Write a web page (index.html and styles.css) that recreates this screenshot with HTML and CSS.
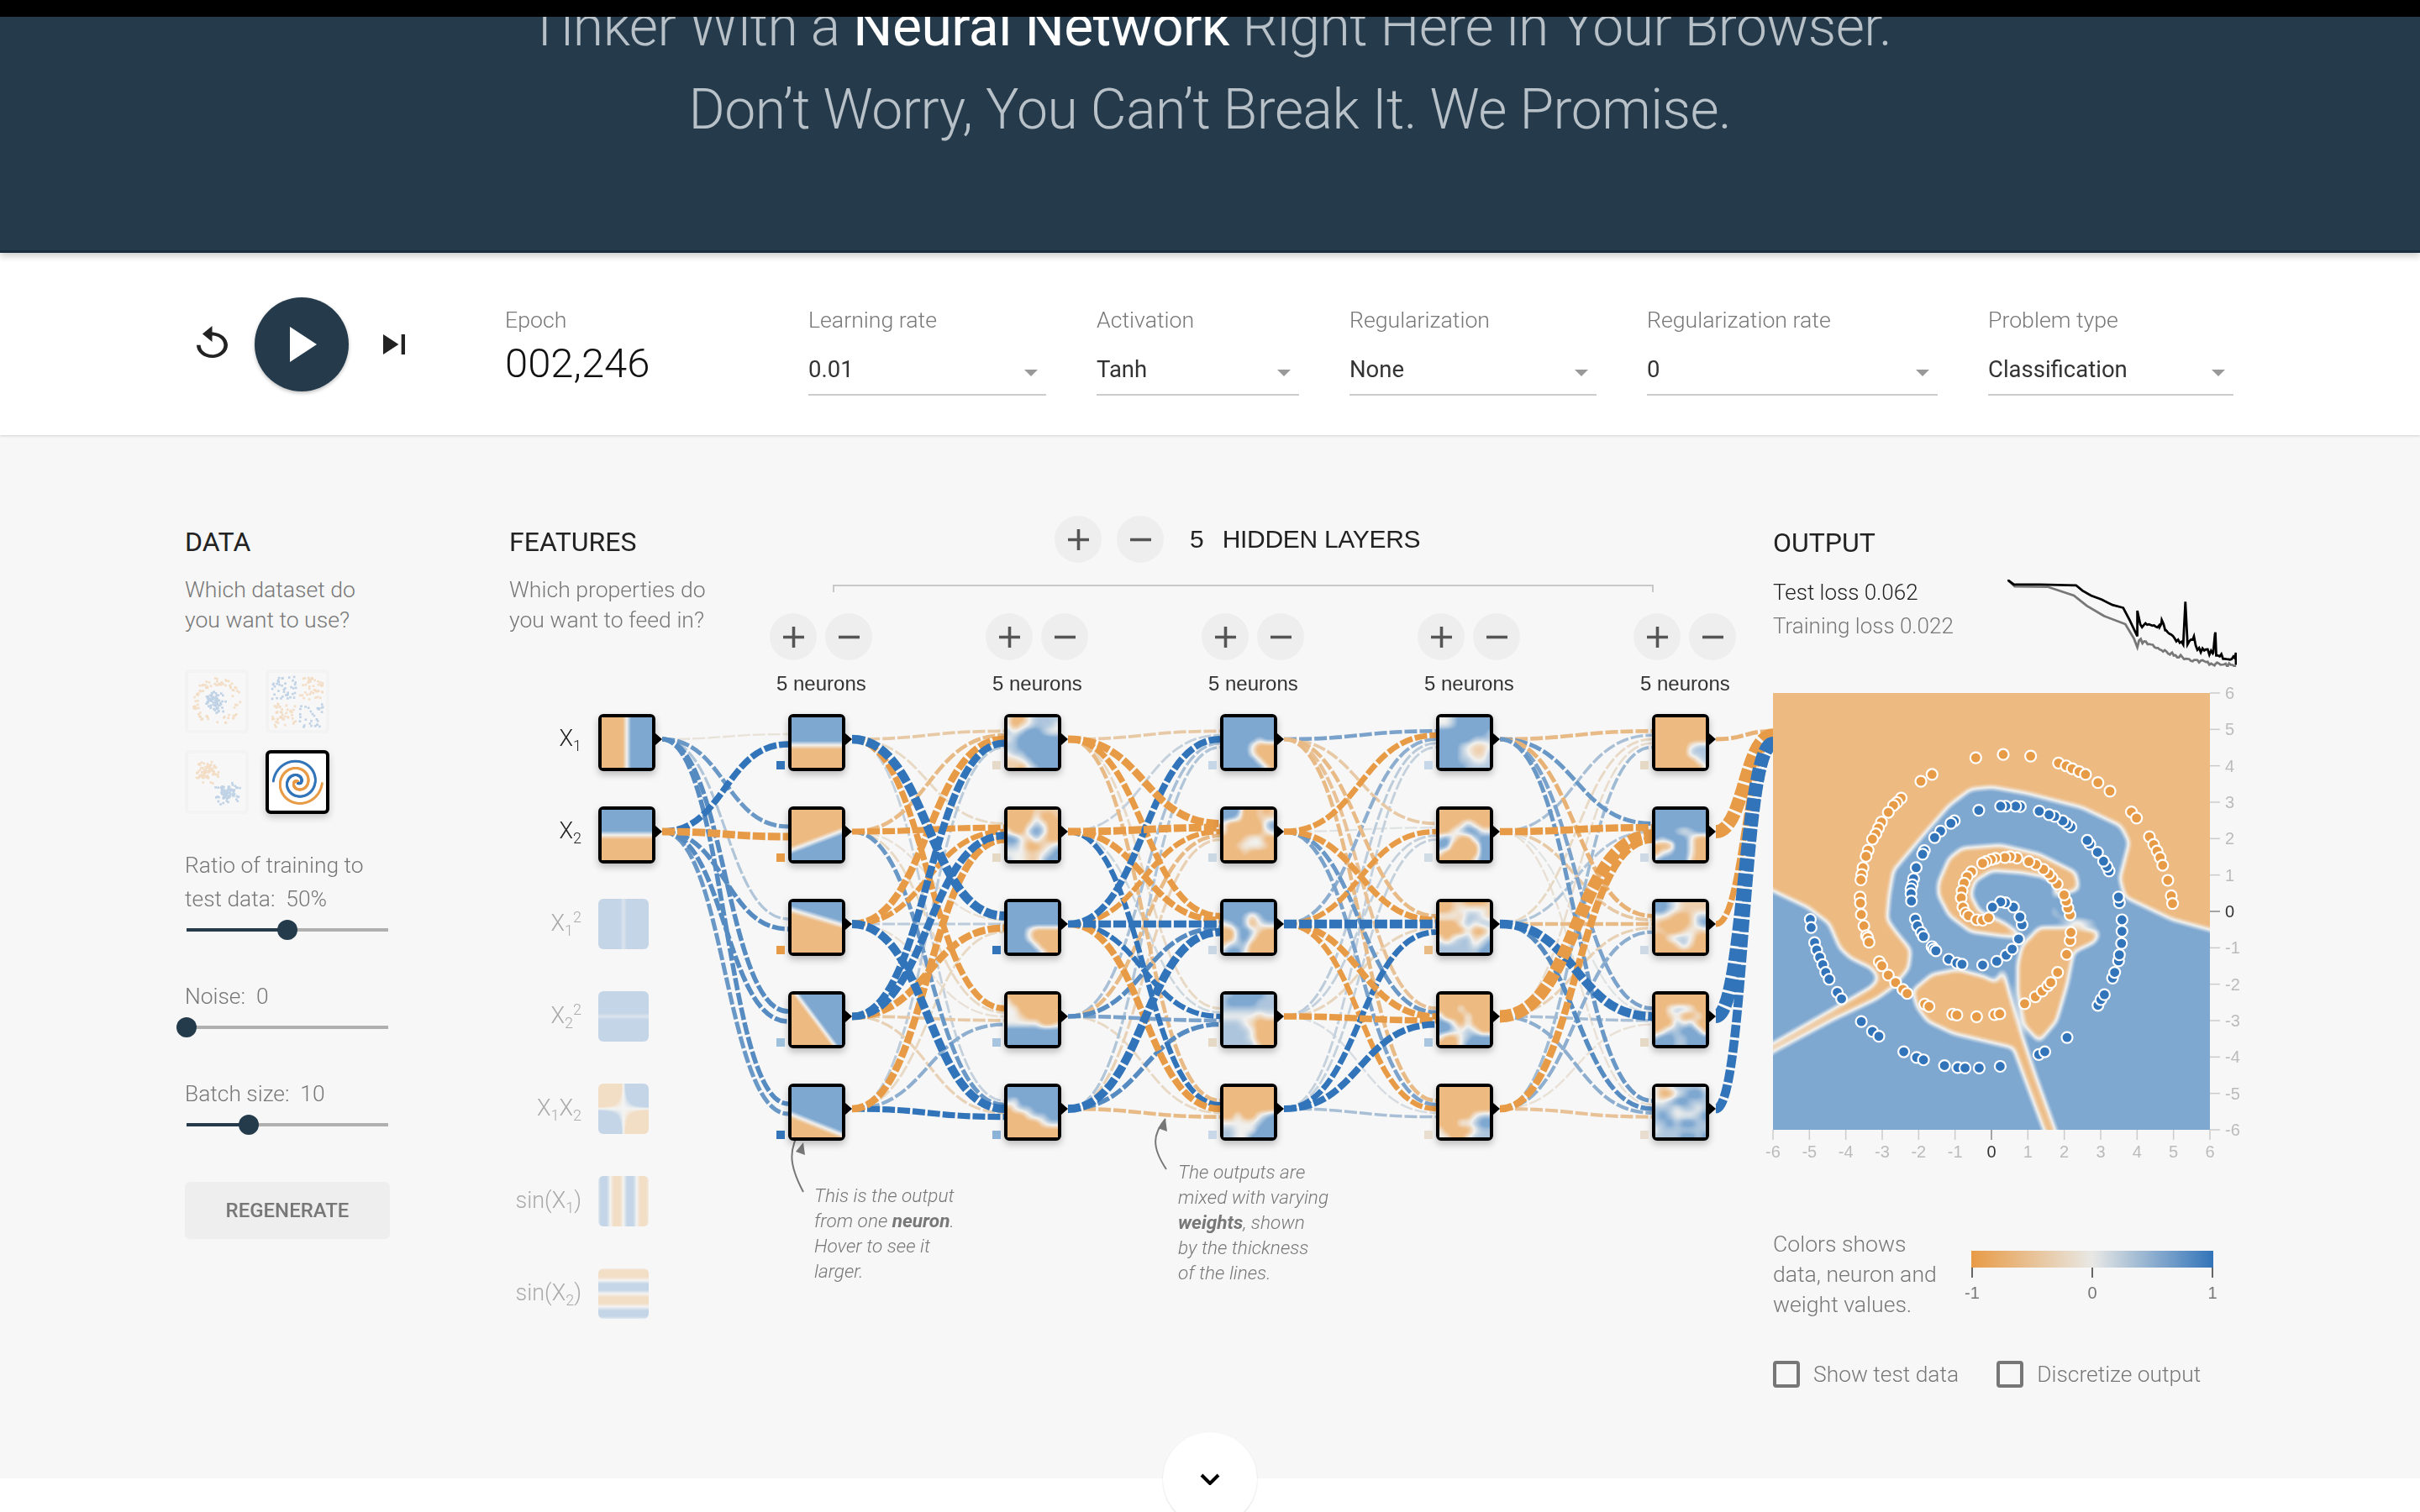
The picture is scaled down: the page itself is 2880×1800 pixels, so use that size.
FILE: index.html
```html
<!DOCTYPE html>
<html lang="en">

<head>
    <meta charset="UTF-8">
    <title>A Neural Network Playground</title>
    <link rel="stylesheet" href="styles.css">
</head>

<body>
    <div class="topbar"></div>
    <header class="hero">
        <h1>Tinker With a <b>Neural Network</b> Right Here in Your Browser.<br>Don’t Worry, You Can’t Break It. We Promise.</h1>
    </header>

    <section class="controls">
        <div class="timeline">
            <svg class="icon-reset" viewBox="4 1 16 21" preserveAspectRatio="none"><path d="M12 5V1L7 6l5 5V7c3.31 0 6 2.69 6 6s-2.69 6-6 6-6-2.69-6-6H4c0 4.42 3.58 8 8 8s8-3.58 8-8-3.58-8-8-8z"/></svg>
            <button class="play"><svg viewBox="0 0 32 42"><path d="M0 0L32 21L0 42z"/></svg></button>
            <svg class="icon-step" viewBox="6 6 12 12" preserveAspectRatio="none"><path d="M6 18l8.5-6L6 6v12zM16 6v12h2V6h-2z"/></svg>
        </div>
        <div class="epoch">
            <div class="field-label">Epoch</div>
            <div class="epoch-value">002,246</div>
        </div>
        <div class="select w-rate">
            <div class="field-label">Learning rate</div>
            <div class="select-value"><span>0.01</span><i class="caret"></i></div>
        </div>
        <div class="select w-activation">
            <div class="field-label">Activation</div>
            <div class="select-value"><span>Tanh</span><i class="caret"></i></div>
        </div>
        <div class="select w-reg">
            <div class="field-label">Regularization</div>
            <div class="select-value"><span>None</span><i class="caret"></i></div>
        </div>
        <div class="select w-regrate">
            <div class="field-label">Regularization rate</div>
            <div class="select-value"><span>0</span><i class="caret"></i></div>
        </div>
        <div class="select w-problem">
            <div class="field-label">Problem type</div>
            <div class="select-value"><span>Classification</span><i class="caret"></i></div>
        </div>
    </section>

    <main class="board">
        <section class="data-col">
            <h4>DATA</h4>
            <p class="desc">Which dataset do<br>you want to use?</p>
            <div class="datasets">
                <canvas class="dataset" id="ds-circle" width="68" height="68"></canvas>
                <canvas class="dataset" id="ds-xor" width="68" height="68"></canvas>
                <canvas class="dataset" id="ds-gauss" width="68" height="68"></canvas>
                <canvas class="dataset selected" id="ds-spiral" width="68" height="68"></canvas>
            </div>
            <div class="slider-label first">Ratio of training to<br>test data:&nbsp; 50%</div>
            <div class="slider"><div class="fill" style="width:50%"></div><div class="thumb" style="left:50%"></div></div>
            <div class="slider-label">Noise:&nbsp; 0</div>
            <div class="slider"><div class="fill" style="width:0%"></div><div class="thumb" style="left:0%"></div></div>
            <div class="slider-label">Batch size:&nbsp; 10</div>
            <div class="slider"><div class="fill" style="width:30.8%"></div><div class="thumb" style="left:30.8%"></div></div>
            <button class="regen">REGENERATE</button>
        </section>

        <section class="net-col" id="net">
            <div class="net-head">
                <div class="features">
                    <h4>FEATURES</h4>
                    <p class="desc">Which properties do<br>you want to feed in?</p>
                </div>
                <div class="layers-head">
                    <button class="round"><svg viewBox="5 5 14 14"><path d="M19 13h-6v6h-2v-6H5v-2h6V5h2v6h6v2z"/></svg></button>
                    <button class="round"><svg viewBox="5 5 14 14"><path d="M19 13H5v-2h14v2z"/></svg></button>
                    <span class="layer-count">5</span>
                    <span class="layer-title">HIDDEN LAYERS</span>
                </div>
            </div>
            <svg class="links" id="links" viewBox="606 518 1504 1242"></svg>
            <div class="note note-one">This is the output<br>from one <b>neuron</b>.<br>Hover to see it<br>larger.</div>
            <div class="note note-two">The outputs are<br>mixed with varying<br><b>weights</b>, shown<br>by the thickness<br>of the lines.</div>
        </section>

        <section class="output-col">
            <h4>OUTPUT</h4>
            <div class="loss-row">
                <div class="stats">
                    <div class="test-loss">Test loss 0.062</div>
                    <div class="train-loss">Training loss 0.022</div>
                </div>
                <svg class="loss-chart" id="loss" viewBox="605 186 535 214" preserveAspectRatio="none"></svg>
            </div>
            <div class="plot">
                <canvas id="heat" width="520" height="520"></canvas>
                <svg class="axes" id="axes" viewBox="0 0 520 520"></svg>
            </div>
            <div class="legend">
                <p class="legend-text">Colors shows<br>data, neuron and<br>weight values.</p>
                <svg class="legend-scale" viewBox="0 0 288 64">
                    <defs>
                        <linearGradient id="scale">
                            <stop offset="0" stop-color="#e89b46"/>
                            <stop offset="0.5" stop-color="#e8e8e5"/>
                            <stop offset="1" stop-color="#3274b9"/>
                        </linearGradient>
                    </defs>
                    <rect width="288" height="20" fill="url(#scale)"/>
                    <path d="M1 20v12M144 20v12M287 20v12" stroke="#666" stroke-width="2"/>
                    <text x="1" y="57" text-anchor="middle">-1</text>
                    <text x="144" y="57" text-anchor="middle">0</text>
                    <text x="287" y="57" text-anchor="middle">1</text>
                </svg>
            </div>
            <div class="checks">
                <label class="check"><i class="box"></i>Show test data</label>
                <label class="check"><i class="box"></i>Discretize output</label>
            </div>
        </section>
    </main>

    <footer class="foot">
        <button class="more"><svg viewBox="0 0 24 14"><path d="M2 2l10 10L22 2" fill="none" stroke="#000" stroke-width="4"/></svg></button>
    </footer>

    <script src="app.js"></script>
</body>

</html>
```

FILE: styles.css
```css
* {
    box-sizing: border-box;
}

html,
body {
    margin: 0;
    padding: 0;
    height: 1800px;
    overflow: hidden;
}

body {
    font-family: Roboto, "Liberation Sans", sans-serif;
    font-weight: 300;
    background-color: #fff;
    color: #222;
}

button {
    border: none;
    padding: 0;
    font-family: inherit;
}

.topbar {
    height: 20px;
    background-color: #000;
    position: relative;
    z-index: 3;
}

.hero {
    display: flow-root;
    height: 281px;
    background-color: #253b4c;
    border-bottom: 3px solid #1a2d3e;
    box-shadow: 0 4px 8px rgba(0, 0, 0, 0.2);
    position: relative;
    z-index: 2;
}

.hero h1 {
    margin: -38px 0 0;
    font-size: 66px;
    font-weight: 300;
    line-height: 99px;
    letter-spacing: -0.5px;
    text-align: center;
    color: #b9c1c8;
}

.hero h1 b {
    font-weight: 400;
    color: #fff;
}

/* controls bar */
.controls {
    height: 217px;
    padding: 62px 0 0 234px;
    background-color: #fff;
    box-shadow: 0 1px 3px rgba(0, 0, 0, 0.15);
    display: flex;
    align-items: flex-start;
    position: relative;
    z-index: 1;
}

.timeline {
    margin-top: -9px;
    display: flex;
    align-items: center;
    height: 112px;
}

.icon-reset {
    width: 37px;
    height: 40px;
    margin: -4px 32px 0 0;
    fill: #222;
}

.icon-step {
    width: 26px;
    height: 24px;
    margin-left: 41px;
    fill: #222;
}

.play {
    width: 112px;
    height: 112px;
    border-radius: 50%;
    background-color: #253b4c;
    box-shadow: 0 2px 4px rgba(0, 0, 0, 0.25);
    display: flex;
    align-items: center;
    justify-content: center;
}

.play svg {
    width: 32px;
    height: 42px;
    margin-left: 4px;
    fill: #fff;
}

.epoch {
    margin-left: 119px;
    width: 361px;
}

.field-label {
    font-size: 26.7px;
    line-height: 36px;
    color: #777;
}

.epoch-value {
    margin-top: 9px;
    font-size: 49px;
    line-height: 50px;
    font-weight: 300;
    color: #111;
}

.select {
    margin-right: 60px;
}

.w-rate { width: 283px; }
.w-activation { width: 241px; }
.w-reg { width: 294px; }
.w-regrate { width: 346px; }
.w-problem { width: 292px; }

.select-value {
    margin-top: 24px;
    height: 48px;
    padding: 0 10px 12px 0;
    border-bottom: 2px solid #ccc;
    font-size: 27.5px;
    line-height: 36px;
    font-weight: 400;
    color: #333;
    display: flex;
    align-items: center;
    justify-content: space-between;
}

.caret {
    margin-top: 8px;
    border-left: 8px solid transparent;
    border-right: 8px solid transparent;
    border-top: 8px solid #999;
}

/* main three columns */
.board {
    height: 1242px;
    background-color: #f7f7f7;
    display: flex;
}

.data-col {
    width: 606px;
    padding: 109px 0 0 220px;
}

.net-col {
    width: 1504px;
    padding-top: 109px;
    position: relative;
}

.output-col {
    flex: 1;
    padding-top: 110px;
}

h4 {
    margin: 0;
    font-size: 32px;
    line-height: 36px;
    font-weight: 400;
    color: #222;
}

.desc {
    margin: 21px 0 0;
    font-size: 26.6px;
    line-height: 36px;
    color: #777;
}

.datasets {
    margin-top: 41px;
    display: grid;
    grid-template-columns: 76px 76px;
    gap: 20px;
}

.dataset {
    width: 76px;
    height: 76px;
    border: 4px solid #e8e8e8;
    border-radius: 6px;
    opacity: 0.28;
}

.dataset.selected {
    border-color: #000;
    background-color: #fff;
    opacity: 1;
    box-shadow: 0 4px 8px rgba(0, 0, 0, 0.2);
}

.slider-label {
    margin-top: 47px;
    font-size: 26.4px;
    line-height: 40px;
    color: #777;
}

.slider-label.first {
    margin-top: 41px;
}

.slider {
    margin: 5px 0 0 2px;
    width: 240px;
    height: 24px;
    background: linear-gradient(#b0b0b0, #b0b0b0) center / 100% 4px no-repeat;
    position: relative;
}

.slider .fill {
    height: 4px;
    margin-top: 10px;
    background-color: #253b4c;
    position: absolute;
    left: 0;
}

.slider .thumb {
    width: 24px;
    height: 24px;
    margin-left: -12px;
    border-radius: 50%;
    background-color: #243b4c;
    position: absolute;
    top: 0;
}

.regen {
    display: block;
    margin-top: 56px;
    width: 244px;
    height: 68px;
    border-radius: 6px;
    background-color: #eee;
    font-size: 24px;
    font-weight: 500;
    color: #777;
}

/* network diagram */
.net-head {
    display: flex;
}

.features {
    width: 649px;
}

.layers-head {
    margin-top: -13px;
    height: 56px;
    display: flex;
    align-items: center;
}

.round {
    width: 56px;
    height: 56px;
    margin-right: 18px;
    border-radius: 50%;
    background-color: #eee;
    display: flex;
    align-items: center;
    justify-content: center;
}

.round svg {
    width: 25px;
    height: 25px;
    fill: #555;
}

.layer-count {
    margin-left: 13px;
    margin-right: 22px;
    font-family: "Liberation Sans", sans-serif;
    font-size: 30px;
    font-weight: 400;
}

.layer-title {
    font-family: "Liberation Sans", sans-serif;
    font-size: 30px;
    font-weight: 400;
    letter-spacing: -0.3px;
}

.layer-tools {
    display: flex;
    gap: 10px;
    position: absolute;
    top: 212px;
}

.layer-tools .round {
    margin: 0;
}

.layer-size {
    font-family: "Liberation Sans", sans-serif;
    font-size: 24px;
    line-height: 30px;
    font-weight: 400;
    color: #333;
    position: absolute;
    top: 281px;
}

.links {
    position: absolute;
    left: 0;
    top: 0;
    width: 1504px;
    height: 1242px;
    overflow: visible;
}

.node {
    position: absolute;
}

.node canvas {
    display: block;
    width: 60px;
    height: 60px;
}

.node.active {
    width: 68px;
    height: 68px;
    border: 4px solid #000;
    border-radius: 6px;
    box-shadow: 0 4px 8px rgba(0, 0, 0, 0.25);
}

.node.active::after {
    content: "";
    position: absolute;
    left: 64px;
    top: 19px;
    border-left: 8px solid #000;
    border-top: 7px solid transparent;
    border-bottom: 7px solid transparent;
}

.node.off {
    width: 60px;
    height: 60px;
    border-radius: 6px;
    overflow: hidden;
    opacity: 0.42;
}

.bias {
    width: 10px;
    height: 10px;
    position: absolute;
}

.feat-label {
    width: 120px;
    font-size: 27px;
    line-height: 40px;
    text-align: right;
    color: #222;
    position: absolute;
}

.feat-label.off {
    color: #aaa;
}

.feat-label sub,
.feat-label sup {
    font-size: 18px;
    line-height: 0;
}

.note {
    font-size: 22.6px;
    line-height: 30px;
    font-style: italic;
    color: #777;
    position: absolute;
}

.note b {
    font-weight: 700;
}

.note-one {
    left: 363px;
    top: 891px;
}

.note-two {
    left: 796px;
    top: 863px;
}

/* output column */
.loss-row {
    margin-top: 21px;
    display: flex;
}

.stats {
    width: 279px;
    font-size: 26px;
    line-height: 40px;
}

.test-loss {
    color: #222;
}

.train-loss {
    color: #777;
}

.loss-chart {
    width: 273px;
    height: 104px;
    margin-top: 5px;
}

.plot {
    margin-top: 31px;
    width: 520px;
    height: 520px;
    position: relative;
}

.plot canvas {
    display: block;
}

.axes {
    position: absolute;
    left: 0;
    top: 0;
    width: 520px;
    height: 520px;
    overflow: visible;
    font-family: "Liberation Sans", sans-serif;
    font-size: 20px;
}

.legend {
    margin-top: 118px;
    display: flex;
}

.legend-text {
    width: 236px;
    margin: 0;
    font-size: 26.6px;
    line-height: 36px;
    color: #777;
}

.legend-scale {
    margin-top: 26px;
    width: 288px;
    height: 64px;
    overflow: visible;
    font-family: "Liberation Sans", sans-serif;
    font-size: 20px;
    fill: #777;
}

.checks {
    margin-top: 49px;
    display: flex;
    gap: 45px;
}

.check {
    display: flex;
    align-items: center;
    gap: 16px;
    font-size: 26.4px;
    line-height: 32px;
    color: #777;
}

.box {
    width: 32px;
    height: 32px;
    border: 4px solid #777;
    border-radius: 4px;
}

.foot {
    height: 40px;
    background-color: #fff;
    position: relative;
}

.more {
    width: 112px;
    height: 112px;
    border-radius: 50%;
    background-color: #fff;
    box-shadow: 0 1px 2px rgba(0, 0, 0, 0.15);
    position: absolute;
    left: 1384px;
    top: -55px;
}

.more svg {
    width: 24px;
    height: 14px;
    display: block;
    margin: 0 auto;
}
```

FILE: app.js
```js
// Neural network diagram, heatmap and thumbnails
const OX = 606, OY = 518;
const COLS = [938, 1195, 1452, 1709, 1966];
const ROW = i => 850 + i * 110;

const ORANGE = [237, 186, 130], BLUE = [127, 168, 209], MID = [240, 240, 238];
const net = document.getElementById('net');

function mix(a, b, t) {
    return [0, 1, 2].map(i => Math.round(a[i] + (b[i] - a[i]) * t));
}

// v goes from -1 (orange) to 1 (blue)
function paint(canvas, f) {
    const ctx = canvas.getContext('2d');
    const w = canvas.width, h = canvas.height;
    const img = ctx.createImageData(w, h);
    for (let y = 0; y < h; y++) {
        for (let x = 0; x < w; x++) {
            const v = Math.max(-1, Math.min(1, f((x + 0.5) / w, (y + 0.5) / h)));
            const c = v < 0 ? mix(MID, ORANGE, -v) : mix(MID, BLUE, v);
            const p = (y * w + x) * 4;
            img.data[p] = c[0];
            img.data[p + 1] = c[1];
            img.data[p + 2] = c[2];
            img.data[p + 3] = 255;
        }
    }
    ctx.putImageData(img, 0, 0);
}

// small value grids, blown up with bilinear filtering and a little blur
const LEVEL = { o: -1, c: -0.45, '.': 0, ';': 0.45, b: 1 };

function grid(rows) {
    const g = rows.split(' ').map(r => [...r].map(ch => LEVEL[ch]));
    const n = g.length - 1, m = g[0].length - 1;
    const sample = (x, y) => {
        const fx = Math.max(0, Math.min(1, x)) * m, fy = Math.max(0, Math.min(1, y)) * n;
        const ix = Math.min(m - 1, Math.floor(fx)), iy = Math.min(n - 1, Math.floor(fy));
        const tx = fx - ix, ty = fy - iy;
        const top = g[iy][ix] * (1 - tx) + g[iy][ix + 1] * tx;
        const bot = g[iy + 1][ix] * (1 - tx) + g[iy + 1][ix + 1] * tx;
        return top * (1 - ty) + bot * ty;
    };
    return (x, y) => {
        let sum = 0;
        for (let dy = -1; dy <= 1; dy++) {
            for (let dx = -1; dx <= 1; dx++) {
                sum += sample(x + dx * 0.05, y + dy * 0.05);
            }
        }
        return sum / 9 * 1.3;
    };
}

// half plane through (x1,y1)-(x2,y2), blue on the side of (bx,by)
function edge(x1, y1, x2, y2, bx, by) {
    const side = (x, y) => (x2 - x1) * (y - y1) - (y2 - y1) * (x - x1);
    const s = Math.sign(side(bx, by));
    return (x, y) => side(x, y) * s * 12;
}

const FEATURES = [
    { label: 'X<sub>1</sub>', f: (x, y) => (x - 0.5) * 12, on: true },
    { label: 'X<sub>2</sub>', f: (x, y) => (0.5 - y) * 12, on: true },
    { label: 'X<sub>1</sub><sup>2</sup>', f: (x, y) => 0.5 + Math.abs(x - 0.5) * 8 },
    { label: 'X<sub>2</sub><sup>2</sup>', f: (x, y) => 0.5 + Math.abs(y - 0.5) * 8 },
    { label: 'X<sub>1</sub>X<sub>2</sub>', f: (x, y) => (x - 0.5) * (0.5 - y) * 60 },
    { label: 'sin(X<sub>1</sub>)', f: (x, y) => Math.sin(12 * x - 6) * 1.3 },
    { label: 'sin(X<sub>2</sub>)', f: (x, y) => Math.sin(6 - 12 * y) * 1.3 }
];

const HIDDEN = [
    [
        edge(0, 0.55, 1, 0.55, 0.5, 0),
        edge(0, 0.8, 1, 0.42, 1, 1),
        edge(0, 0.15, 1, 0.45, 1, 0),
        edge(0.1, 0, 0.85, 1, 1, 0),
        edge(0, 0.55, 1, 0.95, 1, 0)
    ],
    [
        grid('.oo.;;;; .oc.;;;. ;.;bb;.. .;bbbbbb ;;bbbbbb .;;bbbbb cc.;bbbb cco.;bbb'),
        grid('oooocccc oooo.ooc oooc;.oo .oo;b;oo bb.c;coo ;;.ooc.; ...cc.;b ;..cc;bb'),
        grid('bbbbbbbb bbbbbbbb bbbbbbbb bbbbbbbb bbb.oooo bbb.oooo bbbb.ooo bbbbb.oo'),
        grid('oooooooo .ooooooo ..oooooo ..cooooo .....ooc bbbbbbbb bbbbbbbb bbbbbbbb'),
        grid('bbbbbbbb bbbbbbbb ;.bbbbbb o.;;bbbb ooo.;;bb ooooo.;; oooooooo oooooooo')
    ],
    [
        grid('bbbbbbbb bbbbbbbb bbbbbbbb bbbbb;bb bbbb.ooo bbbb.ooo bbbbb.oo bbbbbb.o'),
        grid('bbboococ bb;ooccc .ooooo;b .ooooo.; oooc..oo ooc...co ooocoooo oooooooo'),
        grid('bbbbbbbb bbbbbbbb bbb;c;bb .;b;o.;; oo;b;coo oo;b.ooo c;;;oooo ;bb.oooo'),
        grid(';;bbbb;; ;bbbb;;; ;;;;;;;; .....c.. ;;;.cooo ;;;;.ooo ;;;;.ooo ;;;;;coo'),
        grid('oooooooo oooooooo oooooooo oooooooo oo.oo.;b .....;bb ;;...bbb ;;..bbbb')
    ],
    [
        grid('..;bbbbb ..;bbbbb bbbbbbb; bbbbb;;; bbb;.cc. bbb;.cc; bbb;;..; bbbb;;;;'),
        grid('cooooooo oooooooo oooc;coo oo.;bb.. ;b.oo;bb bboooobb .ooooobb ooooo.bb'),
        grid('ooccoooc ooc....c ...c;;.c ooo.;.;; oooo.oo. .o.;;c.; ;;;;;.;b ;;;;;;bb'),
        grid('oooooooo oooooooo ooo.oooo ;ooo.ooo bb.o.ooo bb;.;.oo .oo.;bbb ooo.bbbb'),
        grid('oooooooo oooooooo oooooooo oooooooo ooooo.;; ooo..;bb .oooo.;; ..oo.;;;')
    ],
    [
        grid('oooooooo oooooooo oooooooo oooooooo ooooo.;; ooooo;;; oooooo.; ooooooo.'),
        grid('bbbbbbbb bbbbbbbb bbbbbbbb bbb;.;bb b;bbb.oo ooobb.oo o.;bb.oo ;bbbbcoo'),
        grid('bb;.cccc bb;.cccc ..cooc;; cooooc;b ccooc.cc oo.;;.oo oooc;coo oooooooo'),
        grid('oooooooo oooooooo oo.;;.oo ooc.oo.o ooo;.;oo oc;;bb;o ;bb;;bbb bbb;;bbb'),
        grid('.c.;;;;. .oo.;bb; ..;bb;;; ;;;.;;.; ;b;...;b ;;b;bb;; .;;;;;;; ;;;;bb;b')
    ]
];

const BIAS = [
    ['#3474b8', '#e89b46', '#e89b46', '#9dc0dc', '#3474b8'],
    ['#e5dac9', '#e5d8c5', '#3474b8', '#a8c5df', '#8ab3d7'],
    ['#c5d6e6', '#cad8e4', '#c9d6e3', '#e5d8c5', '#c9d8e8'],
    ['#c5d7e8', '#d0dce5', '#e8bb85', '#a9c6e0', '#e9ddcf'],
    ['#e5d8c5', '#cdd9e4', '#cdd9e4', '#e5d8c5', '#e9ddcf']
];

// weights, negative is orange and positive is blue. rows are sources, columns are targets
const WEIGHTS = [
    [
        [-0.08, 0.7, 0.3, 0.8, 0.8],
        [1.3, -1.6, 0.8, 0.8, 0.7]
    ],
    [
        [-0.4, -0.2, 2, -1.2, 0.2],
        [-0.6, -1.2, -0.1, -0.2, 0.7],
        [-1.5, -1, 0.25, -0.1, 1.8],
        [1.5, 1.6, -1.5, -0.4, -0.3],
        [0.25, -1.5, -0.2, 0.5, 1.2]
    ],
    [
        [-0.4, -1.6, -1.2, -0.2, -0.6],
        [0.2, -1.6, -1.3, 0.15, 1],
        [1.4, -1, 1.5, 1, -1.4],
        [0.35, -0.6, 0.8, 0.6, -0.2],
        [0.3, -0.3, 1.8, 0.8, -0.6]
    ],
    [
        [0.6, -0.4, -0.6, -0.5, -0.6],
        [-1.1, 0.05, -1.2, 0.7, 0.6],
        [0.5, -1, 2, -1.3, -1],
        [0.25, 0.2, -0.25, -1.3, 0.1],
        [0.2, 0.2, 1.1, 1.4, 0.35]
    ],
    [
        [-0.6, 0.7, -0.7, 0.6, 0.7],
        [0.35, -1.5, -0.4, 0.05, -0.1],
        [-0.2, 0.3, -0.6, 2, 0.8],
        [-0.15, -3, -0.3, 0.35, 0.5],
        [0.4, -1.5, 0.5, -0.1, -0.5]
    ],
    [[-0.7], [-3.2], [-1.2], [3.2], [2]]
];

function addNode(x, y, f, off) {
    const node = document.createElement('div');
    node.className = 'node ' + (off ? 'off' : 'active');
    node.style.left = (x - OX) + 'px';
    node.style.top = (y - OY) + 'px';
    const canvas = document.createElement('canvas');
    canvas.width = canvas.height = 60;
    node.appendChild(canvas);
    net.appendChild(node);
    paint(canvas, f);
}

// features, 7 rows
FEATURES.forEach((feat, i) => {
    const top = ROW(i);
    addNode(712, top, feat.f, !feat.on);
    const label = document.createElement('div');
    label.className = 'feat-label' + (feat.on ? '' : ' off');
    label.innerHTML = feat.label;
    label.style.left = (692 - 120 - OX) + 'px';
    label.style.top = (top + 29 - 20 - OY) + 'px';
    net.appendChild(label);
});

// hidden layers with their headers
const roundButtons = document.querySelector('.layers-head').querySelectorAll('.round');

HIDDEN.forEach((layer, c) => {
    const tools = document.createElement('div');
    tools.className = 'layer-tools';
    tools.style.left = (COLS[c] - 22 - OX) + 'px';
    tools.innerHTML = roundButtons[0].outerHTML + roundButtons[1].outerHTML;
    net.appendChild(tools);

    const size = document.createElement('div');
    size.className = 'layer-size';
    size.style.left = (COLS[c] - 14 - OX) + 'px';
    size.textContent = '5 neurons';
    net.appendChild(size);

    layer.forEach((f, i) => {
        addNode(COLS[c], ROW(i), f);
        const bias = document.createElement('div');
        bias.className = 'bias';
        bias.style.left = (COLS[c] - 14 - OX) + 'px';
        bias.style.top = (ROW(i) + 56 - OY) + 'px';
        bias.style.backgroundColor = BIAS[c][i];
        net.appendChild(bias);
    });
});

// links between layers
const SVG_NS = 'http://www.w3.org/2000/svg';
const links = document.getElementById('links');

function svgEl(parent, name, attrs, text) {
    const el = document.createElementNS(SVG_NS, name);
    Object.keys(attrs).forEach(k => el.setAttribute(k, attrs[k]));
    if (text !== undefined) el.textContent = text;
    parent.appendChild(el);
    return el;
}

function linkColor(w) {
    const t = Math.min(1, Math.abs(w));
    const c = mix([232, 232, 229], w < 0 ? [232, 155, 70] : [50, 116, 185], t);
    return `rgb(${c[0]},${c[1]},${c[2]})`;
}

svgEl(links, 'path', { d: 'M992 705V697H1967V705', fill: 'none', stroke: '#c8c8c8', 'stroke-width': 2 });

const SOURCES = [788, 1014, 1271, 1528, 1785, 2042];
const TARGETS = [938, 1195, 1452, 1709, 1966, 2110];

WEIGHTS.forEach((matrix, l) => {
    const x1 = SOURCES[l], x2 = TARGETS[l], mx = (x1 + x2) / 2;
    const drawOrder = [];
    matrix.forEach((row, s) => row.forEach((w, t) => drawOrder.push({ s, t, w })));
    // thin lines go under thick ones
    drawOrder.sort((a, b) => Math.abs(a.w) - Math.abs(b.w));
    drawOrder.forEach(({ s, t, w }) => {
        const y1 = 880 + s * 110;
        const offset = (s - (matrix.length - 1) / 2) / matrix.length * 24;
        const y2 = (l === 5 ? 880 : 880 + t * 110) + offset;
        svgEl(links, 'path', {
            d: `M${x1} ${y1}C${mx} ${y1} ${mx} ${y2} ${x2} ${y2}`,
            fill: 'none',
            stroke: linkColor(w),
            'stroke-width': (2 + 21.6 * Math.abs(w) / 5).toFixed(1),
            'stroke-dasharray': '15 3'
        });
    });
});

// arrows of the two notes
[
    'M956 1419C938 1385 938 1368 955 1340',
    'M1388 1392C1370 1365 1372 1350 1387 1332'
].forEach(d => svgEl(links, 'path', { d, fill: 'none', stroke: '#777', 'stroke-width': 2 }));
svgEl(links, 'path', { d: 'M956 1360L947 1371L958 1375z M1387 1332L1378 1343L1389 1347z', fill: '#777' });

// heatmap, traced regions in crop space
const sx = x => (x - 59) / 1.96;
const sy = y => (y - 464) / 2.063;

const REGIONS = [
    [0, 400, 1150, 400, 1150, 1068, 1078, 1045, 990, 1020, 880, 965, 868, 920, 890, 830, 870, 790, 780, 745, 650, 710, 570, 695, 520, 700, 470, 740, 420, 800, 380, 850, 340, 900, 330, 960, 325, 1020, 345, 1050, 380, 1095, 375, 1140, 340, 1185, 300, 1215, 200, 1265, 59, 1345, 0, 1385, 0, 1355, 59, 1325, 200, 1240, 290, 1185, 305, 1165, 290, 1140, 240, 1115, 215, 1090, 190, 1030, 140, 990, 59, 950, 0, 920],
    [445, 930, 470, 870, 500, 845, 590, 838, 680, 860, 765, 905, 772, 945, 745, 955, 715, 960, 712, 1010, 760, 1022, 825, 1028, 770, 1035, 720, 1015, 712, 965, 720, 935, 690, 915, 640, 905, 570, 900, 530, 925, 520, 960, 540, 1000, 600, 1030, 645, 1065, 590, 1060, 520, 1050, 470, 1010, 445, 960],
    [640, 1085, 680, 1040, 760, 1040, 820, 1050, 810, 1075, 760, 1100, 745, 1180, 720, 1270, 680, 1320, 645, 1280, 630, 1200, 630, 1130],
    [385, 1195, 430, 1155, 490, 1143, 550, 1160, 580, 1175, 595, 1140, 610, 1200, 635, 1290, 670, 1400, 725, 1560, 700, 1560, 650, 1420, 620, 1335, 560, 1320, 480, 1300, 420, 1270, 395, 1235]
];

const ORANGE_DOTS = [532, 623, 596, 615, 660, 619, 725, 636, 743, 643, 757, 650, 773, 657, 788, 664, 817, 684, 845, 705, 895, 756, 907, 771, 937, 817, 947, 836, 955, 852, 962, 868, 968, 887, 980, 924, 988, 962, 991, 981,
    430, 664, 404, 681, 358, 722, 348, 733, 340, 740, 328, 757, 312, 781, 305, 796, 299, 810, 291, 823, 281, 850, 276, 865, 269, 893, 266, 910, 264, 923, 262, 965, 263, 980, 265, 1008, 271, 1036, 277, 1060, 280, 1065, 283, 1076,
    307, 1124, 313, 1134, 328, 1157, 345, 1175, 362, 1192, 372, 1202, 413, 1228, 423, 1234, 478, 1253, 488, 1255, 534, 1259, 576, 1254, 588, 1252, 646, 1227, 671, 1210, 687, 1196, 700, 1183, 707, 1175, 723, 1150, 744, 1106, 752, 1072, 754, 1052,
    752, 1009, 747, 992, 743, 975, 738, 960, 722, 933, 710, 918, 702, 908, 690, 897, 672, 885, 656, 878, 628, 869, 612, 866, 600, 868, 578, 870, 568, 873, 556, 878, 548, 882, 522, 903, 512, 915, 505, 931, 500, 950, 498, 967, 502, 990, 508, 1004, 515, 1011, 534, 1021, 548, 1022, 562, 1016];

const BLUE_DOTS = [146, 1020, 148, 1040, 156, 1077, 161, 1095, 168, 1113, 175, 1131, 182, 1150, 190, 1167, 209, 1199, 219, 1215, 265, 1271, 291, 1295, 306, 1307, 364, 1345, 394, 1359, 410, 1365, 459, 1379, 490, 1384, 507, 1385, 540, 1385, 589, 1381, 679, 1352, 693, 1345, 745, 1310, 817, 1231, 824, 1217, 832, 1205, 851, 1164, 856, 1150, 865, 1122, 867, 1107, 872, 1079, 873, 1049, 873, 1021, 867, 979, 865, 965,
    843, 901, 838, 890, 830, 877, 816, 855, 798, 835, 792, 826, 754, 793, 744, 785, 735, 778, 716, 767, 703, 763, 680, 754, 636, 743, 625, 742, 602, 742, 590, 742, 539, 752, 482, 778, 474, 784, 450, 803, 436, 819, 412, 851, 408, 860, 393, 893, 387, 920, 384, 935, 381, 945, 381, 957, 382, 975, 391, 1019, 396, 1036, 405, 1052, 410, 1062, 430, 1087, 434, 1093, 439, 1097, 469, 1118, 488, 1127, 500, 1130, 548, 1132,
    581, 1123, 603, 1108, 617, 1093, 632, 1068, 640, 1033, 635, 1014, 620, 990, 601, 979, 590, 977, 571, 990];

function drawHeatmap() {
    const PAD = 20, SIZE = 520;
    const off = document.createElement('canvas');
    off.width = off.height = SIZE + PAD * 2;
    const o = off.getContext('2d', { willReadFrequently: true });
    o.filter = 'blur(4px)';
    o.fillStyle = '#000';
    o.beginPath();
    REGIONS.forEach(r => {
        for (let i = 0; i < r.length; i += 2) {
            const px = sx(r[i]) + PAD, py = sy(r[i + 1]) + PAD;
            if (i === 0) o.moveTo(px, py); else o.lineTo(px, py);
        }
        o.closePath();
    });
    o.fill();
    const alpha = o.getImageData(PAD, PAD, SIZE, SIZE).data;

    const canvas = document.getElementById('heat');
    paint(canvas, (x, y) => {
        const p = (Math.floor(y * SIZE) * SIZE + Math.floor(x * SIZE)) * 4 + 3;
        return (0.5 - alpha[p] / 255) * 2.6;
    });

    const ctx = canvas.getContext('2d');
    const dots = (list, color) => {
        for (let i = 0; i < list.length; i += 2) {
            ctx.beginPath();
            ctx.arc(sx(list[i]), sy(list[i + 1]), 6.5, 0, Math.PI * 2);
            ctx.fillStyle = color;
            ctx.fill();
            ctx.lineWidth = 2.2;
            ctx.strokeStyle = '#fff';
            ctx.stroke();
        }
    };
    dots(ORANGE_DOTS, '#e89b46');
    dots(BLUE_DOTS, '#3274b9');
}
drawHeatmap();

// plot axes
const axes = document.getElementById('axes');
for (let v = -6; v <= 6; v++) {
    const pos = (v + 6) * 520 / 12;
    const zero = v === 0;
    const tick = zero ? '#888' : '#ccc';
    const color = zero ? '#333' : '#bbb';
    svgEl(axes, 'path', { d: `M${pos} 520v12`, stroke: tick, 'stroke-width': 1.5 });
    svgEl(axes, 'text', { x: pos, y: 553, 'text-anchor': 'middle', fill: color }, v);
    svgEl(axes, 'path', { d: `M520 ${520 - pos}h12`, stroke: tick, 'stroke-width': 1.5 });
    svgEl(axes, 'text', { x: 538, y: 527 - pos, fill: color }, v);
}

// seeded random, so the picture is the same on every load
let seed = 7;
function rnd() {
    seed = (seed * 16807) % 2147483647;
    return seed / 2147483647;
}

function gaussian() {
    return (rnd() + rnd() + rnd() + rnd() - 2) / 1.2;
}

// loss chart, the noisy right part gets jitter on top of the traced line
function jagged(points, from, amount) {
    const out = [];
    for (let i = 0; i < points.length - 1; i += 1) {
        const [x1, y1] = points[i], [x2, y2] = points[i + 1];
        out.push(x1 + ',' + y1);
        if (x1 >= from && x2 > x1) {
            for (let x = x1 + 4; x < x2; x += 4) {
                const y = y1 + (y2 - y1) * (x - x1) / (x2 - x1) + (rnd() - 0.5) * amount;
                out.push(x + ',' + y.toFixed(1));
            }
        }
    }
    const last = points[points.length - 1];
    out.push(last[0] + ',' + last[1]);
    return out.join(' ');
}

const loss = document.getElementById('loss');
svgEl(loss, 'polyline', {
    points: jagged([[605, 186], [622, 203], [700, 204], [760, 225], [790, 250], [830, 275], [880, 295], [900, 330], [908, 352], [912, 335], [940, 345], [985, 368], [1040, 383], [1090, 393], [1138, 397]], 912, 10),
    fill: 'none', stroke: '#777', 'stroke-width': 5.5
});
svgEl(loss, 'polyline', {
    points: jagged([[605, 186], [620, 198], [680, 198], [765, 200], [780, 213], [800, 225], [825, 235], [850, 248], [875, 255], [890, 285], [908, 325], [908, 262], [915, 296], [960, 302], [965, 285], [975, 310], [1015, 345], [1020, 240], [1025, 345], [1040, 325], [1048, 358], [1085, 365], [1090, 315], [1092, 372], [1135, 378], [1138, 365], [1138, 395]], 915, 14),
    fill: 'none', stroke: '#000', 'stroke-width': 5.5
});

// dataset thumbnails
function plotPoints(id, points) {
    const ctx = document.getElementById(id).getContext('2d');
    points.forEach(p => {
        ctx.fillStyle = p[2] > 0 ? '#3274b9' : '#e89b46';
        ctx.fillRect(34 + p[0] * 5.4 - 1, 34 - p[1] * 5.4 - 1, 2.6, 2.6);
    });
}

const circle = [], xor = [], gauss = [], spiral = [];
for (let i = 0; i < 160; i++) {
    const a = rnd() * Math.PI * 2, inner = i % 2 === 0;
    const r = inner ? rnd() * 2.6 : 3.6 + rnd() * 1.7;
    circle.push([r * Math.sin(a), r * Math.cos(a), inner ? 1 : -1]);
    const x = (rnd() - 0.5) * 10.4, y = (rnd() - 0.5) * 10.4;
    xor.push([x + Math.sign(x) * 0.4, y + Math.sign(y) * 0.4, x * y > 0 ? -1 : 1]);
    const g = i % 2 === 0 ? 1 : -1;
    gauss.push([g * 2.4 + gaussian() * 2.2, -g * 2.4 + gaussian() * 2.2, g]);
}
for (let i = 0; i < 240; i++) {
    const r = i / 240 * 5.4, t = 1.75 * i / 240 * 2 * Math.PI;
    spiral.push([r * Math.sin(t), -r * Math.cos(t), 1]);
    spiral.push([r * Math.sin(t + Math.PI), -r * Math.cos(t + Math.PI), -1]);
}
plotPoints('ds-circle', circle);
plotPoints('ds-xor', xor);
plotPoints('ds-gauss', gauss);
plotPoints('ds-spiral', spiral);
```
